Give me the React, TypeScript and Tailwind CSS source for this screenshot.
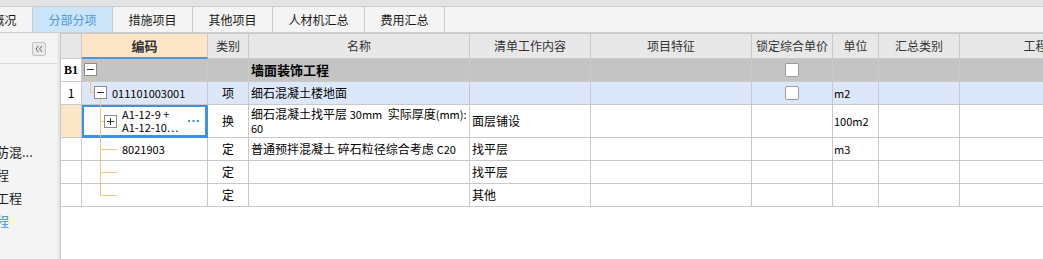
import React from "react";

const OR = "#f5c57c";
const BOX = "#8c8c8c";

const cols = "grid grid-cols-[21px_126px_41px_221px_121px_161px_81px_46px_81px_200px] w-max";
const cell = "border-r border-b border-[#c9c9c9] flex items-center overflow-hidden whitespace-nowrap";

function Check() {
  return <span className="block w-[14px] h-[14px] border border-[#9b9b9b] rounded-[2px] bg-white" />;
}

function TreeB1() {
  return (
    <svg width="16" height="22" className="shrink-0">
      <line x1="8.5" y1="17" x2="8.5" y2="22" stroke={OR} />
      <rect x="2.5" y="4.5" width="12" height="12" fill="#fff" stroke={BOX} />
      <line x1="5" y1="10.5" x2="12" y2="10.5" stroke="#333" />
    </svg>
  );
}
function TreeR1() {
  return (
    <svg width="28" height="22" className="shrink-0">
      <line x1="8.5" y1="0" x2="8.5" y2="10.5" stroke={OR} />
      <line x1="8.5" y1="10.5" x2="12" y2="10.5" stroke={OR} />
      <line x1="18.5" y1="17" x2="18.5" y2="22" stroke={OR} />
      <rect x="12.5" y="4.5" width="12" height="12" fill="#fff" stroke={BOX} />
      <line x1="15" y1="10.5" x2="22" y2="10.5" stroke="#333" />
    </svg>
  );
}
function TreePlus() {
  return (
    <svg width="36" height="32" className="shrink-0">
      <line x1="18.5" y1="0" x2="18.5" y2="32" stroke={OR} />
      <line x1="18.5" y1="16.5" x2="22" y2="16.5" stroke={OR} />
      <rect x="22.5" y="10.5" width="12" height="12" fill="#fff" stroke={BOX} />
      <line x1="25" y1="16.5" x2="32" y2="16.5" stroke="#333" />
      <line x1="28.5" y1="13" x2="28.5" y2="20" stroke="#333" />
    </svg>
  );
}
function TreeLeaf({ last }: { last?: boolean }) {
  return (
    <svg width="36" height="22" className="shrink-0">
      <line x1="18.5" y1="0" x2="18.5" y2={last ? 11.5 : 22} stroke={OR} />
      <line x1="18.5" y1="11.5" x2="35" y2="11.5" stroke={OR} />
    </svg>
  );
}

const tabs = [
  { t: "工程概况", w: "w-[80px] ml-[-47px]" },
  { t: "分部分项", w: "w-[80px]", sel: true },
  { t: "措施项目", w: "w-[80px]" },
  { t: "其他项目", w: "w-[80px]" },
  { t: "人材机汇总", w: "w-[92px]" },
  { t: "费用汇总", w: "w-[80px]" },
];

const headers = ["", "编码", "类别", "名称", "清单工作内容", "项目特征", "锁定综合单价", "单位", "汇总类别", "工程量表达式"];

export default function App() {
  return (
    <div
      className="w-[1043px] h-[259px] overflow-hidden bg-white text-[12px] text-black"
      style={{ fontFamily: "'Noto Sans CJK SC', 'Liberation Sans', sans-serif" }}
    >
      <div className="h-[6px] bg-[#e3e3e3]" />
      <div className="h-[27px] flex border-t border-b border-[#cfcfcf] bg-[#f4f4f4] overflow-hidden">
        {tabs.map((tb) => (
          <div
            key={tb.t}
            className={`${tb.w} shrink-0 flex items-center justify-center border-r border-[#c9c9c9] ${
              tb.sel ? "bg-[#cce4f8] text-[#4a97e4]" : "text-[#1a1a1a]"
            }`}
          >
            {tb.t}
          </div>
        ))}
      </div>
      <div className="flex h-[226px]">
        <div className="w-[60px] flex shrink-0">
          <div className="w-[57px] bg-[#f4f4f4] flex flex-col">
            <div className="h-[31px] border-b border-[#d9d9d9] flex items-center justify-end pr-[11px] pt-[2px]">
              <span className="w-[14px] h-[14px] border border-[#c4c4c4] rounded-[2px] bg-[#e9e9e9] flex items-center justify-center">
                <svg width="10" height="10" viewBox="0 0 10 10">
                  <polyline points="4.5,2 2,5 4.5,8" fill="none" stroke="#666" strokeWidth="1" />
                  <polyline points="8,2 5.5,5 8,8" fill="none" stroke="#666" strokeWidth="1" />
                </svg>
              </span>
            </div>
            <div className="pt-[76px] flex flex-col text-[13px] text-[#1a1a1a] overflow-hidden">
              <div className="h-[23px] flex items-center whitespace-nowrap"><span className="ml-[-4px]">防混...</span></div>
              <div className="h-[23px] flex items-center whitespace-nowrap"><span className="ml-[-4px]">程</span></div>
              <div className="h-[23px] flex items-center whitespace-nowrap"><span className="ml-[-4px]">工程</span></div>
              <div className="h-[23px] flex items-center whitespace-nowrap text-[#3d8fe8]"><span className="ml-[-4px]">程</span></div>
            </div>
          </div>
          <div className="w-[3px] bg-gradient-to-r from-[#efefef] to-[#e0e0e0]" />
        </div>
        <div className="flex-1 border-l border-[#c8c8c8] bg-white overflow-hidden">
          {/* header */}
          <div className={`${cols} border-t border-[#c9c9c9] h-[26px]`}>
            {headers.map((h, i) => (
              <div
                key={i}
                className={`border-r flex items-center justify-center text-[#333] border-[#c9c9c9] ${
                  i === 1
                    ? "bg-[#fde6c8] border-b-2 border-b-[#4a98e6] font-bold text-[13px] text-[#222]"
                    : "bg-[#e8e8e8] border-b"
                }`}
              >
                {h}
              </div>
            ))}
          </div>
          {/* B1 */}
          <div className={`${cols} h-[23px]`}>
            <div className={`${cell} justify-center bg-white font-bold`} style={{ fontFamily: "'Liberation Serif', serif" }}>B1</div>
            <div className={`${cell} bg-[#c4c4c4]`}><TreeB1 /></div>
            <div className={`${cell} bg-[#c4c4c4]`} />
            <div className={`${cell} bg-[#c4c4c4] pl-[2px] font-bold text-[13px]`}>墙面装饰工程</div>
            <div className={`${cell} bg-[#c4c4c4]`} />
            <div className={`${cell} bg-[#c4c4c4]`} />
            <div className={`${cell} bg-[#c4c4c4] justify-center`}><Check /></div>
            <div className={`${cell} bg-[#c4c4c4]`} />
            <div className={`${cell} bg-[#c4c4c4]`} />
            <div className={`${cell} bg-[#c4c4c4]`} />
          </div>
          {/* row 1 */}
          <div className={`${cols} h-[23px]`}>
            <div className={`${cell} justify-center bg-white`}>1</div>
            <div className={`${cell} bg-[#dce8f9]`}>
              <TreeR1 />
              <span className="ml-[2px] text-[11px]">011101003001</span>
            </div>
            <div className={`${cell} bg-[#dce8f9] justify-center`}>项</div>
            <div className={`${cell} bg-[#dce8f9] pl-[2px]`}>细石混凝土楼地面</div>
            <div className={`${cell} bg-[#dce8f9]`} />
            <div className={`${cell} bg-[#dce8f9]`} />
            <div className={`${cell} bg-[#dce8f9] justify-center`}><Check /></div>
            <div className={`${cell} bg-[#dce8f9] pl-[1px] text-[11px]`}>m2</div>
            <div className={`${cell} bg-[#dce8f9]`} />
            <div className={`${cell} bg-[#dce8f9]`} />
          </div>
          {/* row 换 */}
          <div className={`${cols} h-[33px]`}>
            <div className={`${cell} bg-[#fde6c8]`} />
            <div className={`${cell} shadow-[inset_0_0_0_2px_#3d8fe8] border-r-[#3d8fe8] border-b-[#3d8fe8]`}>
              <TreePlus />
              <div className="ml-[4px] text-[11px] leading-[13px] flex flex-col">
                <span>A1-12-9 +</span>
                <span>A1-12-10…</span>
              </div>
              <svg width="11" height="4" className="ml-auto mr-[8px] shrink-0">
                <rect x="0" y="1" width="2" height="2" fill="#3d8fe8" />
                <rect x="4.5" y="1" width="2" height="2" fill="#3d8fe8" />
                <rect x="9" y="1" width="2" height="2" fill="#3d8fe8" />
              </svg>
            </div>
            <div className={`${cell} justify-center`}>换</div>
            <div className={`${cell} pl-[2px]`}>
              <div className="leading-[14px]">
                细石混凝土找平层 <span className="text-[11px]">30mm</span>&nbsp; 实际厚度<span className="text-[11px]">(mm):</span>
                <br />
                <span className="text-[11px]">60</span>
              </div>
            </div>
            <div className={`${cell} pl-[2px]`}>面层铺设</div>
            <div className={cell} />
            <div className={cell} />
            <div className={`${cell} pl-[1px] text-[11px]`}>100m2</div>
            <div className={cell} />
            <div className={cell} />
          </div>
          {/* row 8021903 */}
          <div className={`${cols} h-[23px]`}>
            <div className={cell} />
            <div className={cell}>
              <TreeLeaf />
              <span className="ml-[4px] text-[11px]">8021903</span>
            </div>
            <div className={`${cell} justify-center`}>定</div>
            <div className={`${cell} pl-[2px]`}>普通预拌混凝土 碎石粒径综合考虑 <span className="ml-[3px] text-[11px]">C20</span></div>
            <div className={`${cell} pl-[2px]`}>找平层</div>
            <div className={cell} />
            <div className={cell} />
            <div className={`${cell} pl-[1px] text-[11px]`}>m3</div>
            <div className={cell} />
            <div className={cell} />
          </div>
          {/* row 5 */}
          <div className={`${cols} h-[23px]`}>
            <div className={cell} />
            <div className={cell}><TreeLeaf /></div>
            <div className={`${cell} justify-center`}>定</div>
            <div className={cell} />
            <div className={`${cell} pl-[2px]`}>找平层</div>
            <div className={cell} />
            <div className={cell} />
            <div className={cell} />
            <div className={cell} />
            <div className={cell} />
          </div>
          {/* row 6 */}
          <div className={`${cols} h-[23px]`}>
            <div className={cell} />
            <div className={cell}><TreeLeaf last /></div>
            <div className={`${cell} justify-center`}>定</div>
            <div className={cell} />
            <div className={`${cell} pl-[2px]`}>其他</div>
            <div className={cell} />
            <div className={cell} />
            <div className={cell} />
            <div className={cell} />
            <div className={cell} />
          </div>
        </div>
      </div>
    </div>
  );
}
